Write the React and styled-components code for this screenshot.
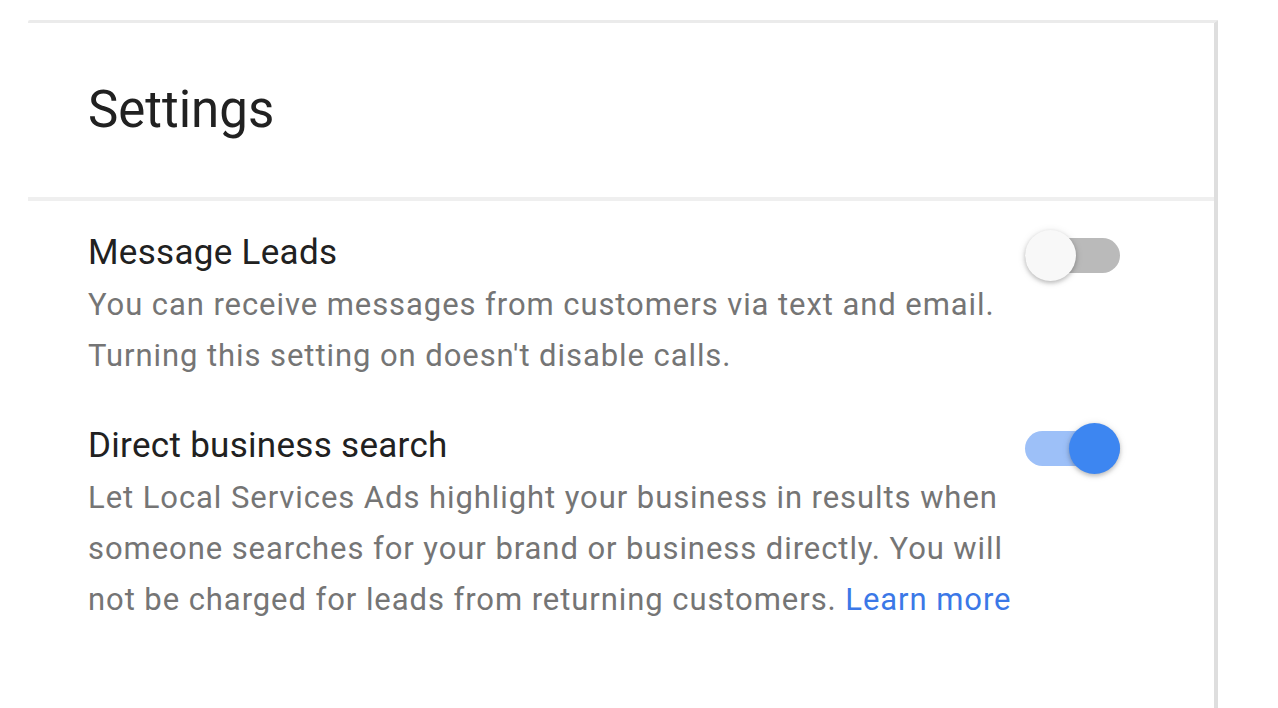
import React, { useState } from 'react'
import styled, { createGlobalStyle } from 'styled-components'

const settings = [
  {
    id: 'messages',
    title: 'Message Leads',
    text: "You can receive messages from customers via text and email. Turning this setting on doesn't disable calls.",
    on: false,
  },
  {
    id: 'direct',
    title: 'Direct business search',
    text: 'Let Local Services Ads highlight your business in results when someone searches for your brand or business directly. You will not be charged for leads from returning customers.',
    link: 'Learn more',
    on: true,
  },
]

const App = () => {
  const [values, setValues] = useState(
    settings.reduce((acc, s) => ({ ...acc, [s.id]: s.on }), {})
  )

  const toggle = id => setValues({ ...values, [id]: !values[id] })

  return (
    <>
      <GlobalStyle />
      <Card>
        <Header>
          <Title>Settings</Title>
        </Header>
        <Body>
          {settings.map(s => (
            <Row key={s.id}>
              <Text>
                <RowTitle>{s.title}</RowTitle>
                <Description>
                  {s.text}
                  {s.link && (
                    <>
                      {' '}
                      <LearnMore href='#'>{s.link}</LearnMore>
                    </>
                  )}
                </Description>
              </Text>
              <Switch
                type='button'
                role='switch'
                aria-checked={values[s.id]}
                onClick={() => toggle(s.id)}
              >
                <Track $on={values[s.id]} />
                <Thumb $on={values[s.id]} />
              </Switch>
            </Row>
          ))}
        </Body>
      </Card>
    </>
  )
}

const GlobalStyle = createGlobalStyle`
  body {
    margin: 0;
    background: #fff;
    font-family: Roboto, 'Noto Sans', Arial, sans-serif;
  }
`
const Card = styled.div`
  margin: 20px 0 0 28px;
  width: 1186px;
  min-height: 700px;
  background: #fff;
  border-top: 3px solid #ebebeb;
  border-right: 4px solid #dedede;
  border-top-left-radius: 2px;
`
const Header = styled.div`
  padding: 57px 60px 57px;
  border-bottom: 4px solid #efefef;
`
const Title = styled.h1`
  margin: 0;
  font-size: 51px;
  line-height: 60px;
  font-weight: 400;
  color: #212121;
`
const Body = styled.div`
  display: flex;
  flex-direction: column;
  gap: 40px;
  padding: 27px 94px 0 60px;
`
const Row = styled.div`
  display: flex;
  justify-content: space-between;
  align-items: flex-start;
`
const Text = styled.div`
  width: 935px;
`
const RowTitle = styled.div`
  font-size: 35px;
  line-height: 49px;
  letter-spacing: 0.3px;
  color: #212121;
`
const Description = styled.p`
  margin: 2px 0 0;
  font-size: 31px;
  line-height: 51px;
  letter-spacing: 0.93px;
  color: #757575;
`
const LearnMore = styled.a`
  color: #3b78e7;
  text-decoration: none;
`
const Switch = styled.button`
  position: relative;
  flex: none;
  width: 95px;
  height: 51px;
  margin-top: 2px;
  padding: 0;
  border: 0;
  background: none;
  cursor: pointer;
`
const Track = styled.span`
  position: absolute;
  left: 0;
  right: 0;
  top: 8px;
  height: 35px;
  border-radius: 18px;
  background: ${p => (p.$on ? '#9dc0f8' : '#bababa')};
`
const Thumb = styled.span`
  position: absolute;
  top: 0;
  left: ${p => (p.$on ? '44px' : '0')};
  width: 51px;
  height: 51px;
  border-radius: 50%;
  background: ${p => (p.$on ? '#3d86f1' : '#f8f8f8')};
  box-shadow: 0 2px 4px rgba(0, 0, 0, 0.22), 0 1px 8px rgba(0, 0, 0, 0.1);
`

export default App
